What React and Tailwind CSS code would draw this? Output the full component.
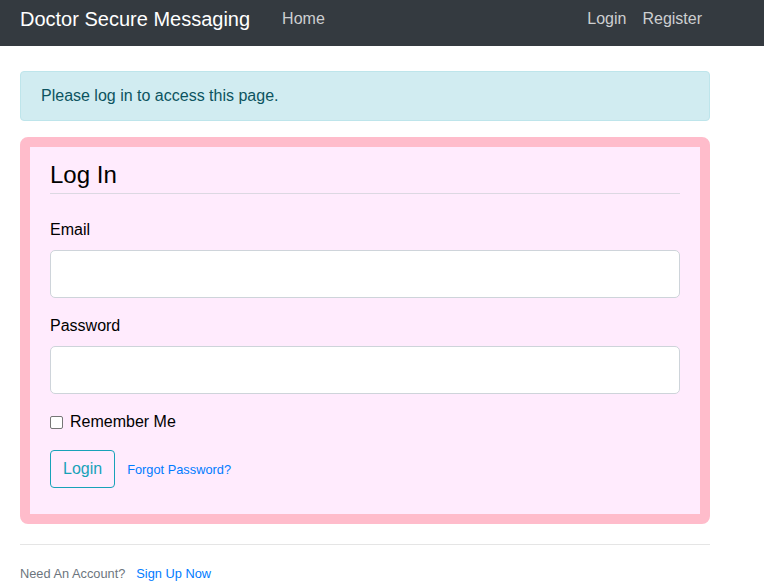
export default function App() {
  return (
    <div className="min-h-[585px] bg-white text-[16px] text-[#212529]" style={{ fontFamily: '"Liberation Sans", Arial, sans-serif' }}>
      <nav className="flex h-[46px] items-start bg-[#343a40]">
        <div className="ml-[20px] mt-[4px] text-[20px] leading-[30px] text-white">Doctor Secure Messaging</div>
        <div className="ml-[32px] mt-[7px] leading-[24px] text-[#cdcfd1]">Home</div>
        <div className="ml-auto mr-[62px] mt-[7px] flex gap-[16px] leading-[24px] text-[#cdcfd1]">
          <span>Login</span>
          <span>Register</span>
        </div>
      </nav>

      <div className="ml-[20px] mt-[25px] w-[690px]">
        <div className="mb-[16px] rounded-[4px] border border-[#bee5eb] bg-[#d1ecf1] px-[20px] py-[12px] leading-[24px] text-[#0c5460]">
          Please log in to access this page.
        </div>

        <div className="rounded-lg border-[10px] border-[#ffbccb] bg-[#ffebfd] px-[20px] pb-[10px] pt-[10px]">
          <div className="mb-[24px] border-b border-[#dcd8e2] text-[24px] leading-[36px] text-black">Log In</div>

          <div className="mb-[16px]">
            <div className="mb-[8px] leading-[24px] text-black">Email</div>
            <div className="h-[48px] w-full rounded-[5px] border border-[#ced4da] bg-white" />
          </div>

          <div className="mb-[16px]">
            <div className="mb-[8px] leading-[24px] text-black">Password</div>
            <div className="h-[48px] w-full rounded-[5px] border border-[#ced4da] bg-white" />
          </div>

          <div className="mb-[16px] flex h-[24px] items-center">
            <div className="mr-[7px] h-[13px] w-[13px] rounded-[2px] border border-[#767676] bg-white" />
            <span className="leading-[24px] text-black">Remember Me</span>
          </div>

          <div className="mb-[16px] flex items-center">
            <div className="flex h-[38px] items-center rounded-[4px] border border-[#17a2b8] px-[12px] leading-[24px] text-[#17a2b8]">Login</div>
            <span className="ml-[12px] mt-[2px] text-[12.8px] text-[#007bff]">Forgot Password?</span>
          </div>
        </div>

        <div className="mt-[20px] border-t border-[#e5e5e5] pt-[16px] leading-[24px]">
          <span className="text-[12.8px] text-[#6c757d]">Need An Account?</span>
          <span className="ml-[11px] text-[12.8px] text-[#007bff]">Sign Up Now</span>
        </div>
      </div>
    </div>
  );
}
